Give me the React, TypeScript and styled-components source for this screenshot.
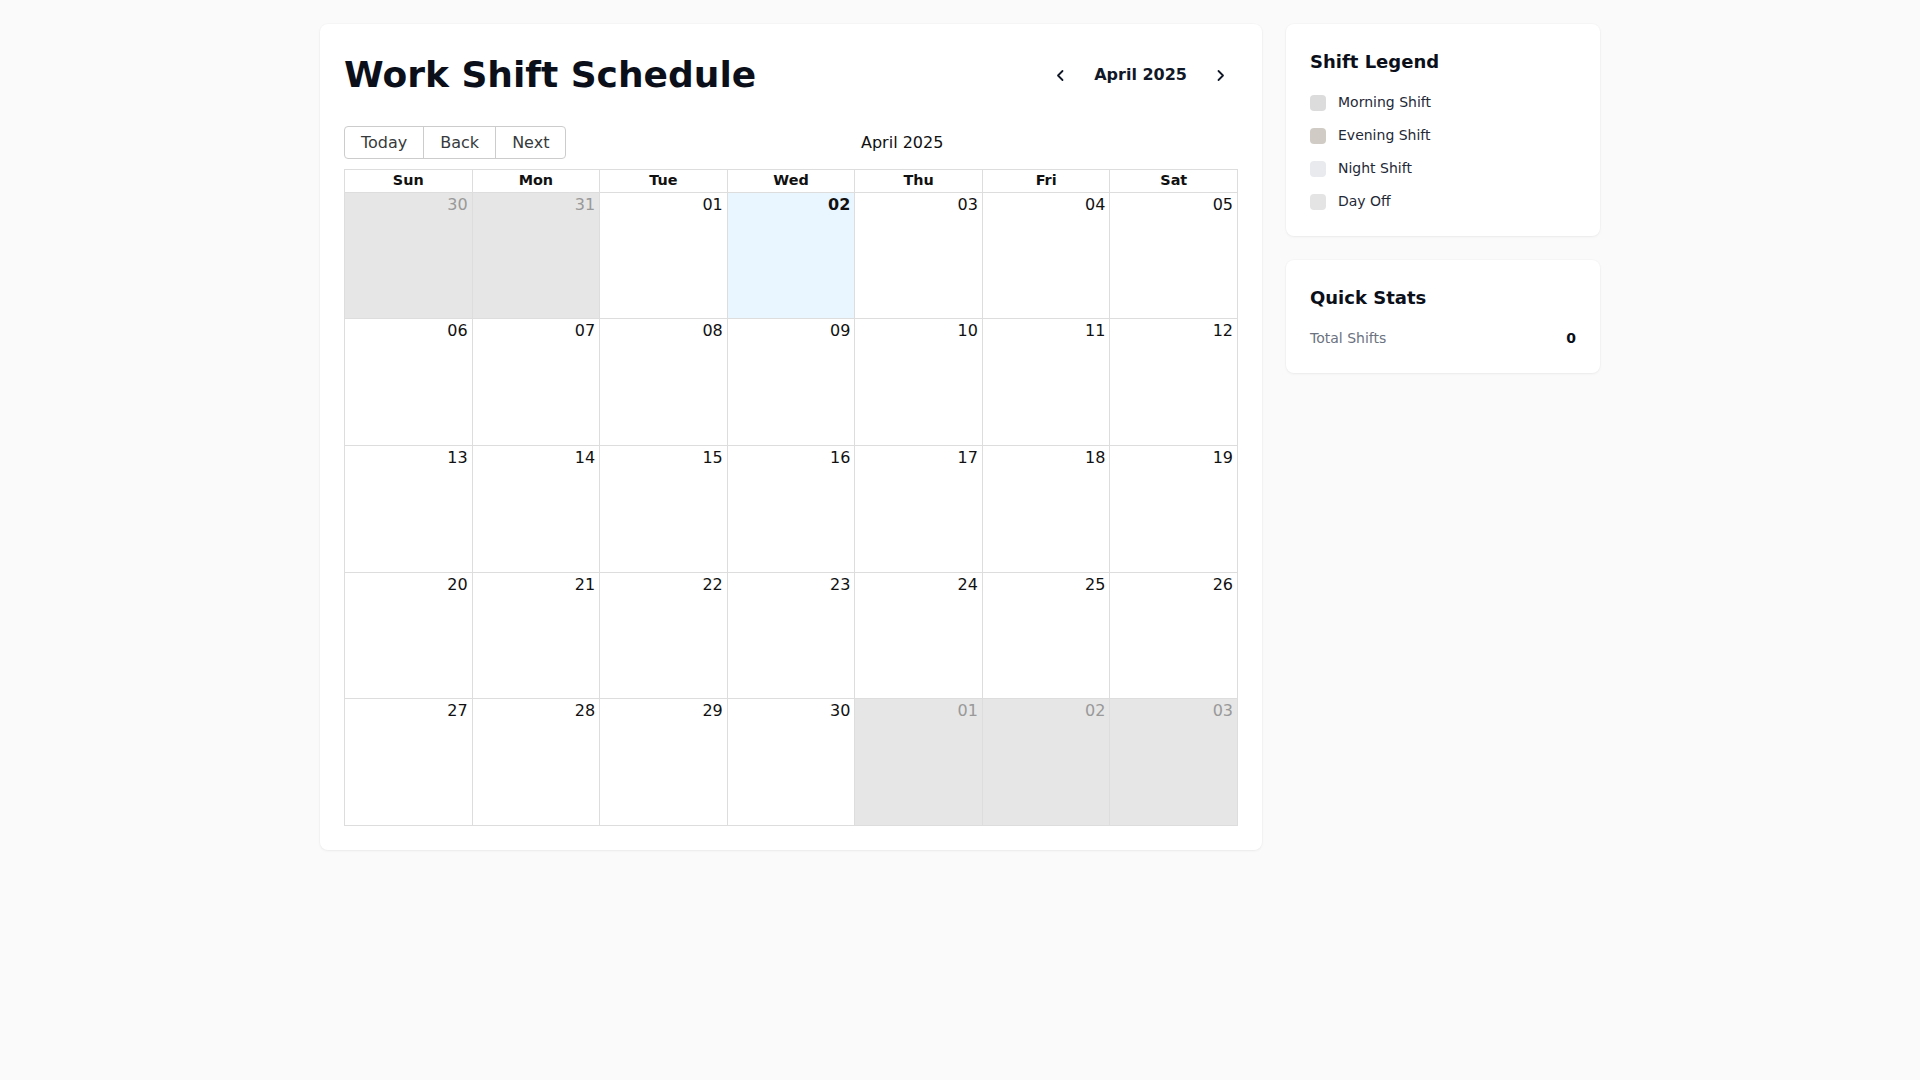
import React from "react";
import styled, { createGlobalStyle, css } from "styled-components";

const GlobalStyle = createGlobalStyle`
  * {
    box-sizing: border-box;
  }
  body {
    margin: 0;
    background: #fafafa;
    font-family: "DejaVu Sans", "Noto Sans", sans-serif;
    line-height: 1.5;
    color: #111827;
  }
`;

type Day = { label: string; off?: boolean; today?: boolean };

const WEEKDAYS = ["Sun", "Mon", "Tue", "Wed", "Thu", "Fri", "Sat"];

const buildWeeks = (): Day[][] => {
  const days: Day[] = [{ label: "30", off: true }, { label: "31", off: true }];
  for (let d = 1; d <= 30; d++) {
    days.push({ label: String(d).padStart(2, "0"), today: d === 2 });
  }
  ["01", "02", "03"].forEach((label) => days.push({ label, off: true }));
  const weeks: Day[][] = [];
  for (let i = 0; i < days.length; i += 7) weeks.push(days.slice(i, i + 7));
  return weeks;
};

const LEGEND = [
  { name: "Morning Shift", color: "#dcdcdc" },
  { name: "Evening Shift", color: "#d0cbc4" },
  { name: "Night Shift", color: "#e8eaee" },
  { name: "Day Off", color: "#e4e4e4" },
];

function Chevron({ dir }: { dir: "left" | "right" }) {
  return (
    <svg width="16" height="16" viewBox="0 0 16 16" fill="none">
      <path
        d={dir === "left" ? "M10.5 4 L6 8.5 L10.5 13" : "M5.5 4 L10 8.5 L5.5 13"}
        stroke="#111827"
        strokeWidth="1.8"
        strokeLinecap="round"
        strokeLinejoin="round"
      />
    </svg>
  );
}

function App() {
  const weeks = buildWeeks();
  return (
    <>
      <GlobalStyle />
      <Page>
        <MainCard>
          <Header>
            <Title>Work Shift Schedule</Title>
            <MonthNav>
              <NavButton aria-label="Previous month">
                <Chevron dir="left" />
              </NavButton>
              <MonthLabel>April 2025</MonthLabel>
              <NavButton aria-label="Next month">
                <Chevron dir="right" />
              </NavButton>
            </MonthNav>
          </Header>

          <Calendar>
            <Toolbar>
              <ButtonGroup>
                <ToolbarButton>Today</ToolbarButton>
                <ToolbarButton>Back</ToolbarButton>
                <ToolbarButton>Next</ToolbarButton>
              </ButtonGroup>
              <ToolbarLabel>April 2025</ToolbarLabel>
            </Toolbar>
            <MonthView>
              <HeaderRow>
                {WEEKDAYS.map((w) => (
                  <HeaderCell key={w}>{w}</HeaderCell>
                ))}
              </HeaderRow>
              {weeks.map((week, i) => (
                <WeekRow key={i}>
                  {week.map((day, j) => (
                    <DayCell key={j} $off={day.off} $today={day.today}>
                      <DateNumber $off={day.off} $today={day.today}>
                        {day.label}
                      </DateNumber>
                    </DayCell>
                  ))}
                </WeekRow>
              ))}
            </MonthView>
          </Calendar>
        </MainCard>

        <Sidebar>
          <SideCard>
            <SideTitle>Shift Legend</SideTitle>
            <LegendList>
              {LEGEND.map((item) => (
                <LegendItem key={item.name}>
                  <Swatch $color={item.color} />
                  {item.name}
                </LegendItem>
              ))}
            </LegendList>
          </SideCard>
          <SideCard>
            <SideTitle>Quick Stats</SideTitle>
            <StatRow>
              <StatLabel>Total Shifts</StatLabel>
              <StatValue>0</StatValue>
            </StatRow>
          </SideCard>
        </Sidebar>
      </Page>
    </>
  );
}

const Page = styled.div`
  max-width: 1280px;
  margin: 0 auto;
  padding: 24px 0;
  display: grid;
  grid-template-columns: 3fr 1fr;
  gap: 24px;
  align-items: start;
`;

const Card = styled.div`
  background: #ffffff;
  border-radius: 8px;
  box-shadow: 0 1px 3px rgba(0, 0, 0, 0.05), 0 0 0 1px rgba(0, 0, 0, 0.015);
  padding: 24px;
`;

const MainCard = styled(Card)``;

const Header = styled.div`
  display: flex;
  justify-content: space-between;
  align-items: center;
  margin-bottom: 24px;
`;

const Title = styled.h1`
  margin: 0;
  font-size: 36px;
  font-weight: 700;
  line-height: 1.5;
  color: #0b0f1a;
`;

const MonthNav = styled.div`
  display: flex;
  align-items: center;
  gap: 18px;
  margin-right: 1px;
`;

const NavButton = styled.button`
  display: flex;
  align-items: center;
  justify-content: center;
  padding: 8px;
  border: none;
  background: transparent;
  border-radius: 6px;
  cursor: pointer;
`;

const MonthLabel = styled.span`
  font-size: 16px;
  font-weight: 700;
  color: #111827;
`;

const Calendar = styled.div`
  height: 700px;
  display: flex;
  flex-direction: column;
`;

const Toolbar = styled.div`
  display: flex;
  align-items: center;
  margin-bottom: 10px;
  font-size: 16px;
`;

const ButtonGroup = styled.div`
  display: inline-flex;
`;

const ToolbarButton = styled.button`
  font-family: inherit;
  font-size: 16px;
  line-height: normal;
  color: #373a3c;
  background: none;
  border: 1px solid #ccc;
  padding: 6px 16px;
  margin: 0;
  cursor: pointer;
  &:first-child {
    border-radius: 4px 0 0 4px;
  }
  &:not(:first-child) {
    margin-left: -1px;
  }
  &:last-child {
    border-radius: 0 4px 4px 0;
  }
`;

const ToolbarLabel = styled.span`
  flex: 1;
  text-align: center;
  padding: 0 10px;
  color: #111;
`;

const MonthView = styled.div`
  flex: 1;
  display: flex;
  flex-direction: column;
  border: 1px solid #ddd;
`;

const HeaderRow = styled.div`
  display: flex;
`;

const HeaderCell = styled.div`
  flex: 1;
  text-align: center;
  font-weight: 700;
  font-size: 14.4px;
  padding: 0 3px;
  color: #111;
  border-bottom: 1px solid #ddd;
  & + & {
    border-left: 1px solid #ddd;
  }
`;

const WeekRow = styled.div`
  flex: 1;
  display: flex;
  & + & {
    border-top: 1px solid #ddd;
  }
`;

const DayCell = styled.div<{ $off?: boolean; $today?: boolean }>`
  flex: 1;
  background: #fff;
  ${(p) =>
    p.$off &&
    css`
      background: #e6e6e6;
    `}
  ${(p) =>
    p.$today &&
    css`
      background: #eaf6ff;
    `}
  & + & {
    border-left: 1px solid #ddd;
  }
`;

const DateNumber = styled.div<{ $off?: boolean; $today?: boolean }>`
  text-align: right;
  padding-right: 4px;
  font-size: 16px;
  color: ${(p) => (p.$off ? "#999" : "#111")};
  font-weight: ${(p) => (p.$today ? 700 : 400)};
`;

const Sidebar = styled.div`
  display: flex;
  flex-direction: column;
  gap: 24px;
`;

const SideCard = styled(Card)``;

const SideTitle = styled.h2`
  margin: 0 0 16px;
  font-size: 18px;
  line-height: 28px;
  font-weight: 700;
  color: #0b0f1a;
`;

const LegendList = styled.div`
  display: flex;
  flex-direction: column;
  gap: 12px;
`;

const LegendItem = styled.div`
  display: flex;
  align-items: center;
  gap: 12px;
  font-size: 14px;
  color: #1f2937;
`;

const Swatch = styled.span<{ $color: string }>`
  width: 16px;
  height: 16px;
  border-radius: 4px;
  background: ${(p) => p.$color};
`;

const StatRow = styled.div`
  display: flex;
  justify-content: space-between;
  align-items: center;
  font-size: 14px;
`;

const StatLabel = styled.span`
  color: #6b7280;
`;

const StatValue = styled.span`
  font-weight: 700;
  color: #0b0f1a;
`;

export default App;
